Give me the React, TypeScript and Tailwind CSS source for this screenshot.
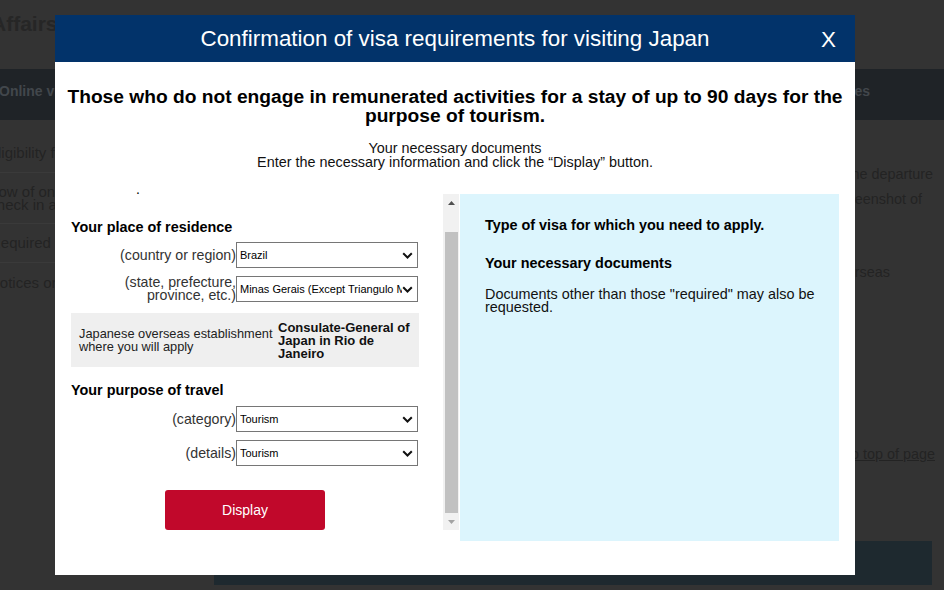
import React from "react";

const Chevron = () => (
  <svg width="11" height="7" viewBox="0 0 11 7" className="shrink-0">
    <polyline points="1.2,1.2 5.5,5.5 9.8,1.2" fill="none" stroke="#111" strokeWidth="2" />
  </svg>
);

const Select = ({ value }: { value: string }) => (
  <div className="w-[182px] h-[26px] border border-[#767676] bg-white flex items-center pl-[3px] pr-[4px] text-[11px] text-black">
    <span className="flex-1 overflow-hidden whitespace-nowrap">{value}</span>
    <Chevron />
  </div>
);

const Row = ({ label, value }: { label: React.ReactNode; value: string }) => (
  <div className="flex items-center">
    <div className="w-[166px] text-right text-[14.2px] leading-[13px] text-[#333]">{label}</div>
    <Select value={value} />
  </div>
);

export default function App() {
  return (
    <div
      className="relative w-[944px] h-[590px] overflow-hidden bg-[#333333]"
      style={{ fontFamily: '"Liberation Sans", Arial, sans-serif' }}
    >
      {/* Background page (dimmed) */}
      <div className="flex flex-col h-full">
        <div className="h-[69px] pt-[8px] -ml-[9px] text-[21px] font-bold text-[#262626] whitespace-nowrap">Affairs of Japan</div>
        <div className="h-[51px] bg-[#1f2327] flex items-start pt-[12px] justify-between text-[14px] font-bold text-[#42474c]">
          <span className="-ml-[1px]">Online visa</span>
          <span className="mr-[74px]">Services</span>
        </div>
        <div className="flex flex-1">
          <div className="w-[180px] flex flex-col text-[15px] text-[#232323] pt-[25px] whitespace-nowrap">
            <div className="leading-[16px] pb-[11px] border-b border-[#3a3a3a] -ml-[12px]">Eligibility for</div>
            <div className="pt-[12px] pb-[12px] leading-[13px] border-b border-[#3a3a3a] -ml-[14px]">Flow of online<br />Check in advance</div>
            <div className="pt-[11px] pb-[11px] leading-[16px] border-b border-[#3a3a3a] -ml-[10px]">Required docs</div>
            <div className="pt-[12px] leading-[16px] -ml-[11px]">Notices on the</div>
          </div>
          <div className="flex-1 flex flex-col text-[14.4px] text-[#232323]">
            <div className="pt-[42px] text-right pr-[11px] leading-[25px]">
              <div>before the departure</div>
              <div className="pr-[11px]">a screenshot of</div>
              <div className="pr-[43px] mt-[48px]">overseas</div>
            </div>
            <div className="text-right pr-[9px] mt-[159px] underline">To top of page</div>
            <div className="mt-[75px] ml-[34px] mr-[12px] h-[44px] bg-[#1e292f]"></div>
          </div>
        </div>
      </div>

      {/* Modal */}
      <div className="absolute left-[55px] top-[15px] w-[800px] h-[560px] bg-white flex flex-col">
        <div className="h-[47px] bg-[#02336a] relative flex items-center justify-center text-white text-[22.4px]">
          <span>Confirmation of visa requirements for visiting Japan</span>
          <span className="absolute right-[19px] top-[8px]">X</span>
        </div>
        <div className="pt-[25px] text-center text-[19.2px] leading-[19px] font-bold text-black whitespace-nowrap">
          Those who do not engage in remunerated activities for a stay of up to 90 days for the
          <br />
          purpose of tourism.
        </div>
        <div className="mt-[16px] text-center text-[14.4px] leading-[14px] text-[#111]">
          Your necessary documents
          <br />
          Enter the necessary information and click the “Display” button.
        </div>
        <div className="h-[25px] flex items-end pl-[81px] text-[14px] leading-[14px] text-black">
          <span className="-mb-[2px]">.</span>
        </div>
        <div className="flex pl-[15px] pr-[16px]">
          {/* Left column */}
          <div className="flex h-[336px]">
            <div className="w-[349px] pt-[25px]">
              <div className="text-[14.4px] leading-[16px] font-bold text-black pl-[1px]">Your place of residence</div>
              <div className="mt-[7px] flex flex-col gap-[8px]">
                <Row label="(country or region)" value="Brazil" />
                <Row
                  label={
                    <>
                      (state, prefecture,
                      <br />
                      province, etc.)
                    </>
                  }
                  value="Minas Gerais (Except Triangulo Mineiro)"
                />
              </div>
              <div className="mt-[11px] ml-[1px] h-[54px] bg-[#efefef] flex items-center pl-[8px]">
                <div className="w-[199px] text-[12.8px] leading-[13px] text-[#222]">
                  Japanese overseas establishment
                  <br />
                  where you will apply
                </div>
                <div className="flex-1 text-[13px] leading-[13px] font-bold text-[#111]">
                  Consulate-General of Japan in Rio de Janeiro
                </div>
              </div>
              <div className="mt-[15px] text-[14.4px] leading-[16px] font-bold text-black pl-[1px]">Your purpose of travel</div>
              <div className="mt-[8px] flex flex-col gap-[8px]">
                <Row label="(category)" value="Tourism" />
                <Row label="(details)" value="Tourism" />
              </div>
              <div className="mt-[24px] flex justify-center pl-[1px]">
                <div className="w-[160px] h-[40px] rounded-[3px] bg-[#c1082b] text-white text-[14px] flex items-center justify-center">
                  Display
                </div>
              </div>
            </div>
            {/* scrollbar */}
            <div className="ml-[24px] w-[16px] h-full bg-[#f1f1f1] flex flex-col items-center">
              <div className="h-[17px] flex items-center justify-center">
                <svg width="7" height="4" viewBox="0 0 7 4"><polygon points="0,4 3.5,0 7,4" fill="#505050" /></svg>
              </div>
              <div className="mt-[21px] w-[13px] h-[281px] bg-[#c1c1c1]"></div>
              <div className="h-[17px] flex items-center justify-center">
                <svg width="7" height="4" viewBox="0 0 7 4"><polygon points="0,0 7,0 3.5,4" fill="#a3a3a3" /></svg>
              </div>
            </div>
          </div>
          {/* Right panel */}
          <div className="ml-[1px] w-[379px] h-[347px] bg-[#dcf5fd] pl-[25px] pt-[23px] text-[14.4px] text-black">
            <div className="font-bold leading-[16px]">Type of visa for which you need to apply.</div>
            <div className="mt-[22px] font-bold leading-[16px]">Your necessary documents</div>
            <div className="mt-[17px] leading-[13px] text-[#111] whitespace-nowrap">
              Documents other than those "required" may also be
              <br />
              requested.
            </div>
          </div>
        </div>
      </div>
    </div>
  );
}
